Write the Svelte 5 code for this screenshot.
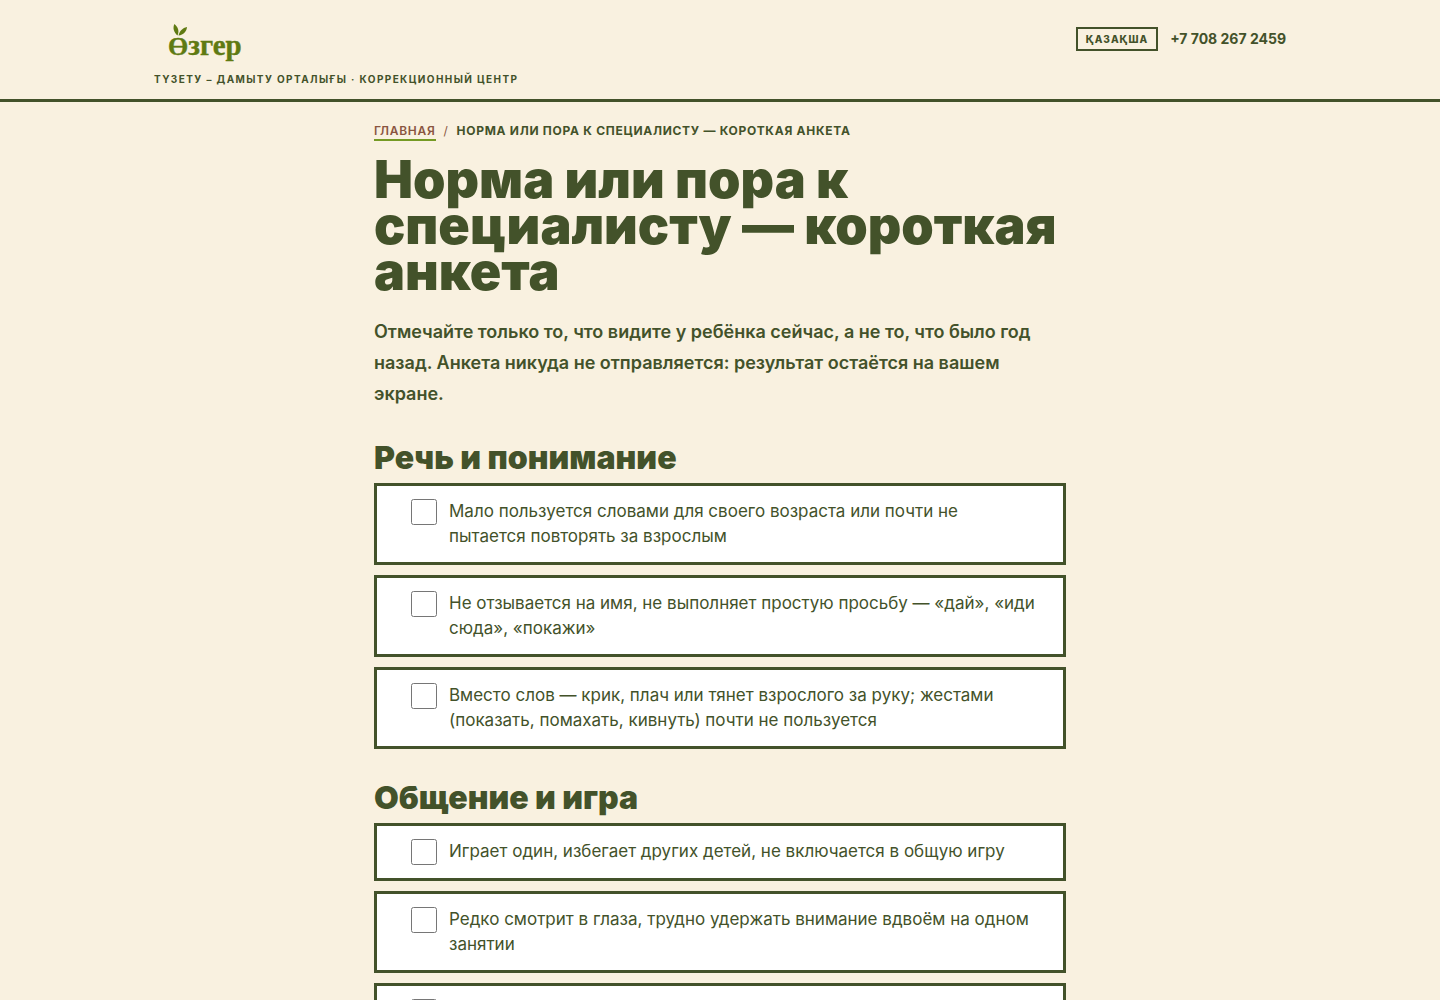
<script>
  const sections = [
    {
      title: 'Речь и понимание',
      items: [
        'Мало пользуется словами для своего возраста или почти не пытается повторять за взрослым',
        'Не отзывается на имя, не выполняет простую просьбу — «дай», «иди сюда», «покажи»',
        'Вместо слов — крик, плач или тянет взрослого за руку; жестами (показать, помахать, кивнуть) почти не пользуется',
      ],
    },
    {
      title: 'Общение и игра',
      items: [
        'Играет один, избегает других детей, не включается в общую игру',
        'Редко смотрит в глаза, трудно удержать внимание вдвоём на одном занятии',
        '',
      ],
    },
  ];
</script>

<header>
  <div class="bar">
    <a class="brand" href="/">
      <svg class="logo" viewBox="0 0 100 50" role="img" aria-label="Өзгер">
        <text x="14" y="37"><tspan class="initial">Ө</tspan><tspan>згер</tspan></text>
        <path d="M23.500 17.500C19.500 14 18.500 9.500 20.500 6C24 9 25.500 13 23.500 17.500Z" />
        <path d="M24.500 17.500C25.500 13 28.500 10 33 9C32.500 13.500 29.500 17 24.500 17.500Z" />
      </svg>
      <span class="tagline">Түзету – дамыту орталығы · Коррекционный центр</span>
    </a>
    <div class="contacts">
      <a class="lang" href="/kk">Қазақша</a>
      <a class="phone" href="tel:+77082672459">+7 708 267 2459</a>
    </div>
  </div>
</header>

<main>
  <nav aria-label="Навигация">
    <a href="/">Главная</a>
    <span>/</span>
    <strong>Норма или пора к специалисту — короткая анкета</strong>
  </nav>
  <h1>Норма или пора к специалисту — короткая анкета</h1>
  <p class="lead">
    Отмечайте только то, что видите у ребёнка сейчас, а не то, что было год назад. Анкета никуда не
    отправляется: результат остаётся на вашем экране.
  </p>
  <form>
    {#each sections as section}
      <section>
        <h2>{section.title}</h2>
        <div class="options">
          {#each section.items as item}
            <label>
              <input type="checkbox" />
              <span>{item}</span>
            </label>
          {/each}
        </div>
      </section>
    {/each}
  </form>
</main>

<style>
  :global(html) {
    overflow-x: hidden;
    scrollbar-width: none;
  }
  :global(body) {
    margin: 0;
    background: #f9f1e0;
    color: #43522a;
    font-family: Inter, 'Noto Sans', sans-serif;
  }
  a {
    color: inherit;
    text-decoration: none;
  }
  header {
    border-bottom: 3px solid #43522a;
  }
  .bar {
    box-sizing: border-box;
    max-width: 1180px;
    margin: 0 auto;
    padding: 18px 24px 12px;
    display: flex;
    justify-content: space-between;
    align-items: flex-start;
    gap: 24px;
  }
  .brand {
    display: flex;
    flex-direction: column;
    gap: 3px;
  }
  .logo {
    display: block;
    width: 100px;
    height: 50px;
    fill: #5f7a12;
  }
  .logo text {
    font: bold 29px 'Liberation Serif', serif;
    stroke: #5f7a12;
    stroke-width: 0.4px;
  }
  .logo .initial {
    font-size: 26px;
  }
  .tagline {
    font-size: 10px;
    line-height: 16px;
    font-weight: 700;
    letter-spacing: 0.14em;
    text-transform: uppercase;
  }
  .contacts {
    display: flex;
    align-items: center;
    gap: 12px;
    padding-top: 9px;
  }
  .lang {
    border: 2px solid #43522a;
    padding: 2px 8px;
    font-size: 10px;
    line-height: 16px;
    font-weight: 800;
    letter-spacing: 0.1em;
    text-transform: uppercase;
  }
  .phone {
    font-size: 14px;
    line-height: 24px;
    font-weight: 700;
  }
  main {
    box-sizing: border-box;
    max-width: 740px;
    margin: 0 auto;
    padding: 20px 24px 48px;
  }
  nav {
    display: flex;
    flex-wrap: wrap;
    align-items: baseline;
    gap: 8px;
    font-size: 12px;
    line-height: 17px;
    letter-spacing: 0.06em;
    text-transform: uppercase;
    color: #8a5540;
  }
  nav a {
    border-bottom: 2px solid #759a24;
    font-weight: 600;
  }
  nav strong {
    color: #43522a;
    font-weight: 700;
  }
  h1 {
    margin: 16px 0 21px;
    font-size: 52px;
    line-height: 46px;
    font-weight: 900;
  }
  .lead {
    margin: 0;
    font-size: 18px;
    line-height: 31px;
    font-weight: 600;
  }
  section {
    padding-top: 32px;
  }
  h2 {
    margin: 0 0 8px;
    font-size: 32px;
    line-height: 34px;
    font-weight: 900;
  }
  .options {
    display: flex;
    flex-direction: column;
    gap: 10px;
  }
  label {
    display: flex;
    align-items: flex-start;
    gap: 12px;
    border: 3px solid #43522a;
    background: #fff;
    padding: 13px 26px 13px 34px;
    font-size: 17px;
    line-height: 25px;
  }
  input {
    flex: none;
    width: 26px;
    height: 26px;
    margin: 0;
  }
</style>
